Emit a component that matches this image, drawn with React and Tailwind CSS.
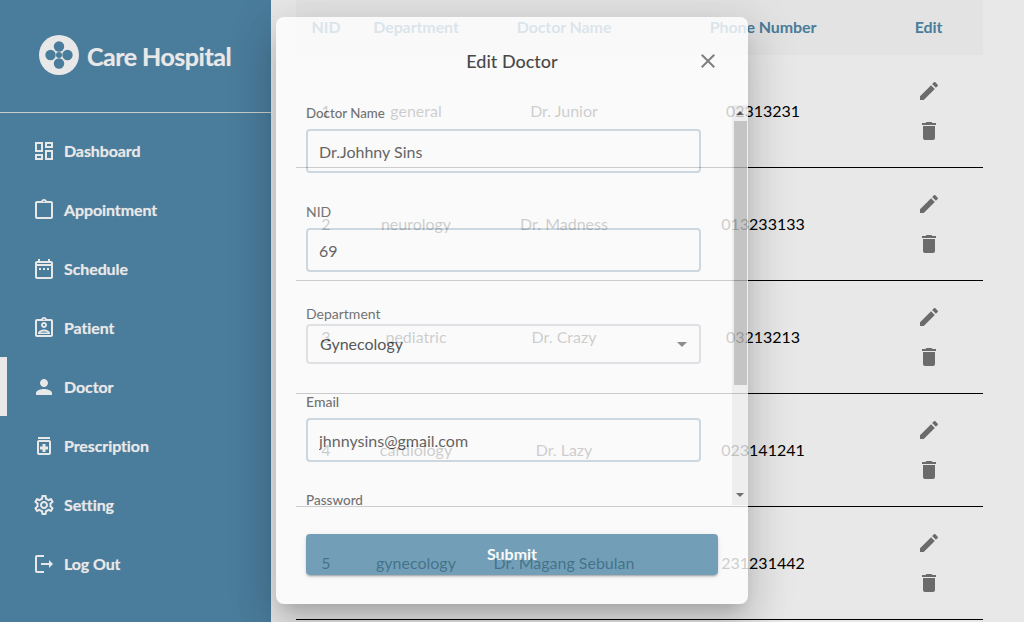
import React from 'react';

const nav = [
  { label: 'Dashboard', d: 'M19 5v2h-4V5h4M9 5v6H5V5h4m10 8v6h-4v-6h4M9 17v2H5v-2h4M21 3h-8v6h8V3zM11 3H3v10h8V3zm10 8h-8v10h8V11zm-10 4H3v6h8v-6z' },
  { label: 'Appointment', d: 'M19 3h-4.18C14.4 1.84 13.3 1 12 1c-1.3 0-2.4.84-2.82 2H5c-1.1 0-2 .9-2 2v14c0 1.1.9 2 2 2h14c1.1 0 2-.9 2-2V5c0-1.1-.9-2-2-2zm-7-.25c.41 0 .75.34.75.75s-.34.75-.75.75-.75-.34-.75-.75.34-.75.75-.75zM19 19H5V5h14v14z' },
  { label: 'Schedule', d: 'M19 4h-1V2h-2v2H8V2H6v2H5c-1.1 0-2 .9-2 2v14c0 1.1.9 2 2 2h14c1.1 0 2-.9 2-2V6c0-1.1-.9-2-2-2zm0 16H5V9h14v11zM5 7V6h14v1H5zm2 4h2v2H7zm4 0h2v2h-2zm4 0h2v2h-2z' },
  { label: 'Patient', d: 'M19 3h-4.18C14.4 1.84 13.3 1 12 1c-1.3 0-2.4.84-2.82 2H5c-1.1 0-2 .9-2 2v14c0 1.1.9 2 2 2h14c1.1 0 2-.9 2-2V5c0-1.1-.9-2-2-2zm-7-.25c.41 0 .75.34.75.75s-.34.75-.75.75-.75-.34-.75-.75.34-.75.75-.75zM19 19H5V5h14v14zM12 12c1.65 0 3-1.35 3-3s-1.35-3-3-3-3 1.35-3 3 1.35 3 3 3zm0-4c.55 0 1 .45 1 1s-.45 1-1 1-1-.45-1-1 .45-1 1-1zm6 9.4c0-2.5-3.97-3.9-6-3.9s-6 1.4-6 3.9V18h12v-.6zM8.3 16.4c.7-.6 2.1-1 3.7-1s3 .4 3.7 1H8.3z' },
  { label: 'Doctor', active: true, d: 'M12 12c2.21 0 4-1.79 4-4s-1.79-4-4-4-4 1.79-4 4 1.79 4 4 4zm0 2c-2.67 0-8 1.34-8 4v2h16v-2c0-2.66-5.33-4-8-4z' },
  { label: 'Prescription', d: 'M6 3h12v2H6zm11 3H7c-1.1 0-2 .9-2 2v11c0 1.1.9 2 2 2h10c1.1 0 2-.9 2-2V8c0-1.1-.9-2-2-2zm0 13H7V8h10v11zm-6.5-1h3v-2.5H16v-3h-2.5V10h-3v2.5H8v3h2.5z' },
  { label: 'Setting', d: 'M19.43 12.98c.04-.32.07-.64.07-.98 0-.34-.03-.66-.07-.98l2.11-1.65c.19-.15.24-.42.12-.64l-2-3.46c-.09-.16-.26-.25-.44-.25-.06 0-.12.01-.17.03l-2.49 1c-.52-.4-1.08-.73-1.69-.98l-.38-2.65C14.46 2.18 14.25 2 14 2h-4c-.25 0-.46.18-.49.42l-.38 2.65c-.61.25-1.17.59-1.69.98l-2.49-1c-.06-.02-.12-.03-.18-.03-.17 0-.34.09-.43.25l-2 3.46c-.13.22-.07.49.12.64l2.11 1.65c-.04.32-.07.65-.07.98 0 .33.03.66.07.98l-2.11 1.65c-.19.15-.24.42-.12.64l2 3.46c.09.16.26.25.44.25.06 0 .12-.01.17-.03l2.49-1c.52.4 1.08.73 1.69.98l.38 2.65c.03.24.24.42.49.42h4c.25 0 .46-.18.49-.42l.38-2.65c.61-.25 1.17-.59 1.69-.98l2.49 1c.06.02.12.03.18.03.17 0 .34-.09.43-.25l2-3.46c.12-.22.07-.49-.12-.64l-2.11-1.65zm-1.98-1.71c.04.31.05.52.05.73 0 .21-.02.43-.05.73l-.14 1.13.89.7 1.08.84-.7 1.21-1.27-.51-1.04-.42-.9.68c-.43.32-.84.56-1.25.73l-1.06.43-.16 1.13-.2 1.35h-1.4l-.19-1.35-.16-1.13-1.06-.43c-.43-.18-.83-.41-1.23-.71l-.91-.7-1.06.43-1.27.51-.7-1.21 1.08-.84.89-.7-.14-1.13c-.03-.31-.05-.54-.05-.74s.02-.43.05-.73l.14-1.13-.89-.7-1.08-.84.7-1.21 1.27.51 1.04.42.9-.68c.43-.32.84-.56 1.25-.73l1.06-.43.16-1.13.2-1.35h1.39l.19 1.35.16 1.13 1.06.43c.43.18.83.41 1.23.71l.91.7 1.06-.43 1.27-.51.7 1.21-1.07.85-.89.7.14 1.13zM12 8c-2.21 0-4 1.79-4 4s1.79 4 4 4 4-1.79 4-4-1.79-4-4-4zm0 6c-1.1 0-2-.9-2-2s.9-2 2-2 2 .9 2 2-.9 2-2 2z' },
  { label: 'Log Out', d: 'M5 5h7V3H5c-1.1 0-2 .9-2 2v14c0 1.1.9 2 2 2h7v-2H5V5zm16 7l-4-4v3H9v2h8v3l4-4z' },
];

const doctors = [
  { id: 1, dept: 'general', name: 'Dr. Junior', phone: '02313231' },
  { id: 2, dept: 'neurology', name: 'Dr. Madness', phone: '013233133' },
  { id: 3, dept: 'pediatric', name: 'Dr. Crazy', phone: '03213213' },
  { id: 4, dept: 'cardiology', name: 'Dr. Lazy', phone: '023141241' },
  { id: 5, dept: 'gynecology', name: 'Dr. Magang Sebulan', phone: '231231442' },
];

const cols = 'grid grid-cols-[60px_120px_176px_222px_1fr] items-center text-center';

const Icon = ({ d, className }) => (
  <svg viewBox="0 0 24 24" className={className} fill="currentColor">
    <path d={d} />
  </svg>
);

const Sidebar = () => (
  <aside className="w-[271px] shrink-0 h-full bg-[#4a7c9b] text-[#e8e8e8]">
    <div className="h-[113px] border-b border-[#c9cdc9] flex items-center pl-[39px] pb-[2px] gap-[8px]">
      <svg viewBox="0 0 40 40" className="w-10 h-10">
        <circle cx="20" cy="20" r="20" fill="#e8e8e8" />
        <g fill="#4a7c9b">
          <circle cx="20" cy="11.5" r="5.2" />
          <circle cx="20" cy="28.5" r="5.2" />
          <circle cx="11.5" cy="20" r="5.2" />
          <circle cx="28.5" cy="20" r="5.2" />
          <circle cx="20" cy="20" r="3" />
        </g>
      </svg>
      <span className="mt-[3px] text-[25px] font-bold tracking-[-0.5px] [text-shadow:0_0_1px_rgba(232,232,232,0.5)]">
        Care Hospital
      </span>
    </div>
    <nav className="pt-[8px]">
      {nav.map((item) => (
        <div key={item.label} className="relative h-[59px] flex items-center pl-[32px] gap-[8px]">
          {item.active && <div className="absolute left-0 top-0 w-[7px] h-full bg-[#e8e8e8]" />}
          <Icon d={item.d} className="w-6 h-6" />
          <span className="text-[16px] font-bold tracking-[-0.1px] [text-shadow:0_0_1px_rgba(232,232,232,0.5)]">
            {item.label}
          </span>
        </div>
      ))}
    </nav>
  </aside>
);

const DoctorTable = () => (
  <main className="flex-1 pl-[25px] pr-[41px]">
    <div className={`${cols} h-[55px] pb-[2px] bg-[#e3e3e3] text-[#4a7c9b] font-bold tracking-[-0.1px] text-[16px]`}>
      <div>NID</div>
      <div>Department</div>
      <div>Doctor Name</div>
      <div>Phone Number</div>
      <div>Edit</div>
    </div>
    {doctors.map((doc) => (
      <div key={doc.id} className={`${cols} h-[113px] border-b border-black text-black text-[16px]`}>
        <div>{doc.id}</div>
        <div>{doc.dept}</div>
        <div>{doc.name}</div>
        <div>{doc.phone}</div>
        <div className="flex flex-col items-center text-[#6b6b6b]">
          <div className="w-10 h-10 flex items-center justify-center">
            <Icon className="w-6 h-6" d="M3 17.25V21h3.75L17.81 9.94l-3.75-3.75L3 17.25zM20.71 7.04c.39-.39.39-1.02 0-1.41l-2.34-2.34c-.39-.39-1.02-.39-1.41 0l-1.83 1.83 3.75 3.75 1.83-1.83z" />
          </div>
          <div className="w-10 h-10 flex items-center justify-center">
            <Icon className="w-6 h-6" d="M6 19c0 1.1.9 2 2 2h8c1.1 0 2-.9 2-2V7H6v12zM19 4h-3.5l-1-1h-5l-1 1H5v2h14V4z" />
          </div>
        </div>
      </div>
    ))}
  </main>
);

const TextField = ({ label, value, className, labelClass, inputGap }) => (
  <div className={className}>
    <div className={`h-4 text-[#555] ${labelClass}`}>{label}</div>
    {value && (
      <input
        readOnly
        value={value}
        className={`${inputGap} block w-[395px] h-[44px] px-[11px] border-2 border-[#c6d3df] rounded-[4px] bg-transparent text-[16px] text-[#444] outline-none`}
      />
    )}
  </div>
);

const EditModal = () => (
  <div className="absolute left-[276px] top-[17px] w-[472px] h-[587px] bg-white rounded-lg opacity-80 shadow-[0_11px_15px_-7px_rgba(0,0,0,0.2),0_24px_38px_3px_rgba(0,0,0,0.14),0_9px_46px_8px_rgba(0,0,0,0.12)]">
    <div className="relative h-[88px] flex items-center justify-center">
      <h2 className="text-[18px] font-medium text-[#222]">Edit Doctor</h2>
      <Icon
        className="absolute left-[420px] top-[32px] w-6 h-6 text-[#666]"
        d="M19 6.41L17.59 5 12 10.59 6.41 5 5 6.41 10.59 12 5 17.59 6.41 19 12 13.41 17.59 19 19 17.59 13.41 12z"
      />
    </div>
    <div className="relative h-[400px] overflow-hidden pl-[30px]">
      <TextField label="Doctor Name" value="Dr.Johhny Sins" labelClass="leading-4 text-[13.3px] font-medium" inputGap="mt-2" />
      <TextField label="NID" value="69" className="mt-[30px]" labelClass="leading-[17px] text-sm" inputGap="mt-[9px]" />
      <div className="mt-[33px]">
        <div className="h-4 leading-[17px] text-sm text-[#555]">Department</div>
        <div className="mt-[3px] w-[395px] h-10 flex items-center justify-between pl-3 pr-[5px] border-2 border-[#dcdfe2] rounded-[4px] text-[16px] text-[#333]">
          <span>Gynecology</span>
          <Icon className="w-6 h-6 text-[#777]" d="M7 10l5 5 5-5z" />
        </div>
      </div>
      <TextField label="Email" value="jhnnysins@gmail.com" className="mt-[29px]" labelClass="leading-[17px] text-sm font-medium" inputGap="mt-[9px]" />
      <TextField label="Password" className="mt-[30px]" labelClass="leading-[17px] text-[13.5px] font-medium" />
      <div className="absolute right-0 top-0 w-4 h-full bg-[#f0f0f0] flex flex-col items-center">
        <div className="h-4 flex items-center justify-center">
          <div className="w-0 h-0 border-x-4 border-x-transparent border-b-4 border-b-[#505050]" />
        </div>
        <div className="w-[13px] h-[264px] bg-[#bcbcbc]" />
        <div className="mt-auto h-[20px] flex items-center justify-center">
          <div className="w-0 h-0 border-x-4 border-x-transparent border-t-4 border-t-[#505050]" />
        </div>
      </div>
    </div>
    <div className="pt-[29px] pl-[30px]">
      <button className="w-[412px] h-[41px] pb-[2px] rounded-[4px] bg-[#558eac] text-white font-bold text-[16px] shadow-[0_3px_1px_-2px_rgba(0,0,0,0.2),0_2px_2px_0_rgba(0,0,0,0.14),0_1px_5px_0_rgba(0,0,0,0.12)]">
        Submit
      </button>
    </div>
  </div>
);

const App = () => {
  return (
    <div className="relative flex w-[1024px] h-[622px] overflow-hidden bg-[#e8e8e8] font-['Lato',sans-serif]">
      <Sidebar />
      <DoctorTable />
      <EditModal />
    </div>
  );
};

export default App;
